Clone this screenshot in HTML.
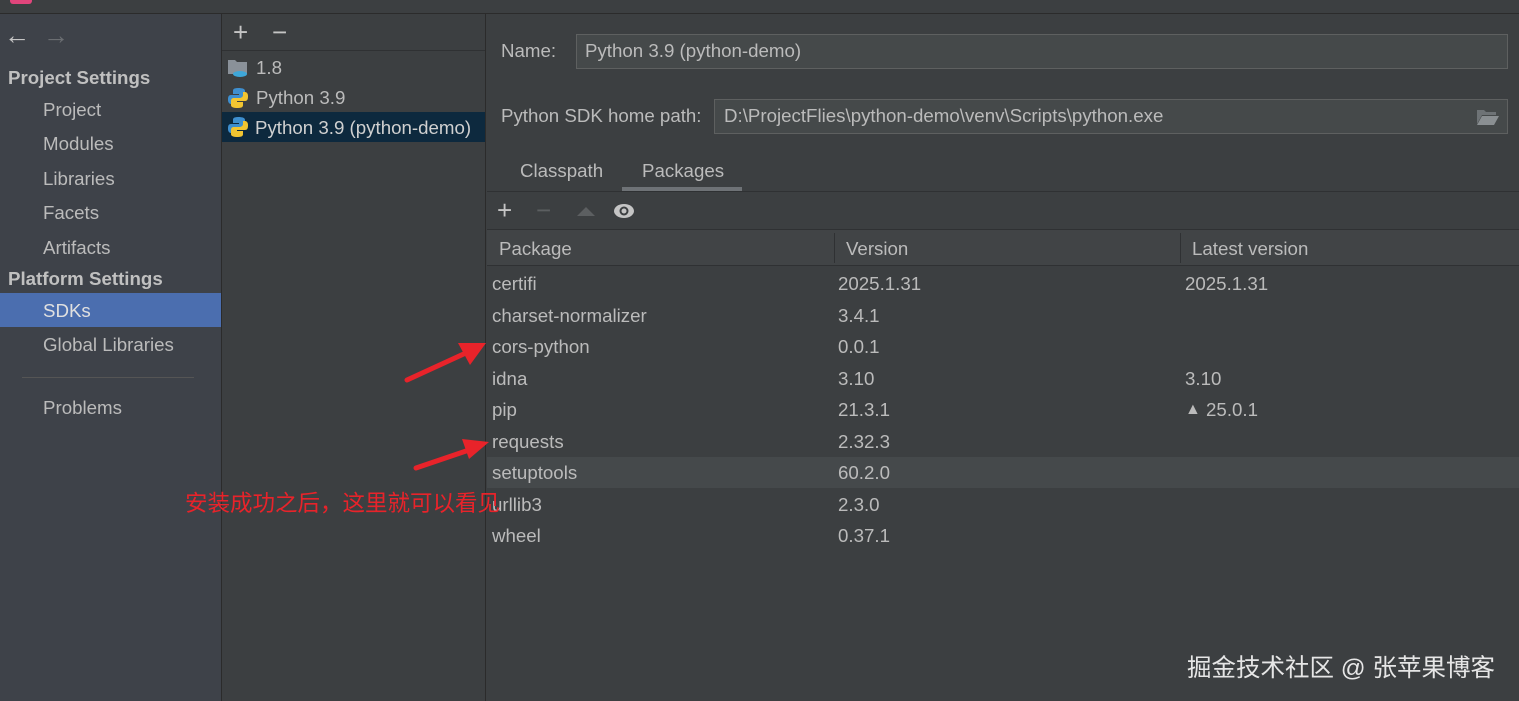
<!DOCTYPE html>
<html><head><meta charset="utf-8"><style>
*{margin:0;padding:0;box-sizing:border-box}
body{width:1519px;height:701px;overflow:hidden;background:#3c3f41;font-family:"Liberation Sans","Noto Sans CJK SC",sans-serif;color:#bbbbbb;font-size:18.7px;position:relative}
.a{position:absolute;white-space:nowrap}
</style></head><body>
<div class="a" style="left:0;top:0;width:1519px;height:14px;background:#3c3f41;border-bottom:1px solid #2b2b2b"></div>
<div class="a" style="left:10px;top:-6px;width:22px;height:10px;background:#e0457b;border-radius:3px"></div>
<!-- sidebar -->
<div class="a" style="left:0;top:14px;width:221px;height:687px;background:#3e4249"></div>
<div class="a" style="left:4px;top:20px;font-size:26px;color:#c5c5c5">&#8592;</div>
<div class="a" style="left:43px;top:20px;font-size:26px;color:#6b6e72">&#8594;</div>
<div class="a" style="left:8px;top:67px;font-weight:bold;color:#c0c0c0">Project Settings</div>
<div class="a" style="left:43px;top:99px">Project</div>
<div class="a" style="left:43px;top:133px">Modules</div>
<div class="a" style="left:43px;top:168px">Libraries</div>
<div class="a" style="left:43px;top:202px">Facets</div>
<div class="a" style="left:43px;top:237px">Artifacts</div>
<div class="a" style="left:8px;top:268px;font-weight:bold;color:#c0c0c0">Platform Settings</div>
<div class="a" style="left:0;top:293px;width:221px;height:34px;background:#4b6eaf"></div>
<div class="a" style="left:43px;top:300px;color:#e0e0e0">SDKs</div>
<div class="a" style="left:43px;top:334px">Global Libraries</div>
<div class="a" style="left:22px;top:377px;width:172px;height:1px;background:#555"></div>
<div class="a" style="left:43px;top:397px">Problems</div>
<!-- middle -->
<div class="a" style="left:221px;top:14px;width:1px;height:687px;background:#2b2b2b"></div>
<div class="a" style="left:222px;top:14px;width:263px;height:37px;background:#3c3f41;border-bottom:1px solid #2f3133"></div>
<div class="a" style="left:233px;top:17px;font-size:26px;color:#c5c5c5">+</div>
<div class="a" style="left:272px;top:17px;font-size:26px;color:#c5c5c5">&#8722;</div>
<svg class="a" style="left:227px;top:58px" width="22" height="22"><path d="M1 2h7l2 2h10v12H1z" fill="#8a9199"/><ellipse cx="13" cy="16" rx="7" ry="3" fill="#3ea7d9"/></svg>
<div class="a" style="left:256px;top:57px">1.8</div>
<svg class="a" style="left:227px;top:87px" width="22" height="22"><path d="M11 1C6 1 6 3 6 4v3h6v1H4C1 8 1 11 1 13s1 4 3 4h2v-3c0-2 2-3 4-3h5c2 0 3-1 3-3V4c0-2-2-3-7-3z" fill="#3e8fcf"/><path d="M11 21c5 0 5-2 5-3v-3h-6v-1h8c3 0 3-3 3-5s-1-4-3-4h-2v3c0 2-2 3-4 3H7c-2 0-3 1-3 3v4c0 2 2 3 7 3z" fill="#f2c531"/></svg>
<div class="a" style="left:256px;top:87px">Python 3.9</div>
<div class="a" style="left:222px;top:112px;width:263px;height:30px;background:#0d293e"></div>
<svg class="a" style="left:227px;top:116px" width="22" height="22"><path d="M11 1C6 1 6 3 6 4v3h6v1H4C1 8 1 11 1 13s1 4 3 4h2v-3c0-2 2-3 4-3h5c2 0 3-1 3-3V4c0-2-2-3-7-3z" fill="#3e8fcf"/><path d="M11 21c5 0 5-2 5-3v-3h-6v-1h8c3 0 3-3 3-5s-1-4-3-4h-2v3c0 2-2 3-4 3H7c-2 0-3 1-3 3v4c0 2 2 3 7 3z" fill="#f2c531"/></svg>
<div class="a" style="left:255px;top:117px;color:#d0d0d0">Python 3.9 (python-demo)</div>
<div class="a" style="left:485px;top:14px;width:1px;height:687px;background:#2b2b2b"></div>
<!-- right -->
<div class="a" style="left:501px;top:40px">Name:</div>
<div class="a" style="left:576px;top:34px;width:932px;height:35px;background:#45494a;border:1px solid #5e6060"></div>
<div class="a" style="left:585px;top:40px">Python 3.9 (python-demo)</div>
<div class="a" style="left:501px;top:105px">Python SDK home path:</div>
<div class="a" style="left:714px;top:99px;width:794px;height:35px;background:#45494a;border:1px solid #5e6060"></div>
<div class="a" style="left:724px;top:105px">D:\ProjectFlies\python-demo\venv\Scripts\python.exe</div>
<svg class="a" style="left:1476px;top:107px" width="24" height="20"><path d="M1 3h7l2 2h10v3H6L1 17z" fill="#6e7376"/><path d="M6 9h17l-5 9H1z" fill="#8a8f92"/></svg>
<div class="a" style="left:520px;top:160px">Classpath</div>
<div class="a" style="left:642px;top:160px">Packages</div>
<div class="a" style="left:622px;top:187px;width:120px;height:4px;background:#6e7276"></div>
<div class="a" style="left:487px;top:191px;width:1032px;height:1px;background:#2f3133"></div>
<div class="a" style="left:497px;top:195px;font-size:26px;color:#c5c5c5">+</div>
<div class="a" style="left:536px;top:195px;font-size:26px;color:#5c5f61">&#8722;</div>
<svg class="a" style="left:576px;top:205px" width="20" height="12"><path d="M1 11L10 2l9 9z" fill="#5c5f61"/></svg>
<svg class="a" style="left:613px;top:202px" width="22" height="18"><ellipse cx="11" cy="9" rx="10" ry="7" fill="#c5c5c5"/><circle cx="11" cy="9" r="4.5" fill="#3c3f41"/><circle cx="11" cy="9" r="2.5" fill="#c5c5c5"/></svg>
<div class="a" style="left:487px;top:229px;width:1032px;height:1px;background:#2f3133"></div>
<div class="a" style="left:487px;top:230px;width:1032px;height:36px;background:#414446;border-bottom:1px solid #2f3133"></div>
<div class="a" style="left:834px;top:233px;width:1px;height:30px;background:#2f3133"></div>
<div class="a" style="left:1180px;top:233px;width:1px;height:30px;background:#2f3133"></div>
<div class="a" style="left:499px;top:238px">Package</div>
<div class="a" style="left:846px;top:238px">Version</div>
<div class="a" style="left:1192px;top:238px">Latest version</div>
<div class="a" style="left:487px;top:457px;width:1032px;height:31px;background:#45494b"></div>
<div class="a" style="left:492px;top:268px;line-height:31.5px">certifi<br>charset-normalizer<br>cors-python<br>idna<br>pip<br>requests<br>setuptools<br>urllib3<br>wheel</div>
<div class="a" style="left:838px;top:268px;line-height:31.5px">2025.1.31<br>3.4.1<br>0.0.1<br>3.10<br>21.3.1<br>2.32.3<br>60.2.0<br>2.3.0<br>0.37.1</div>
<div class="a" style="left:1185px;top:268px;line-height:31.5px">2025.1.31<br><br><br>3.10<br><span style="font-size:16px;position:relative;top:-2px">&#9650;</span> 25.0.1</div>
<!-- annotations -->
<svg class="a" style="left:0;top:0" width="1519" height="701">
<g stroke="#e8232a" stroke-width="5" stroke-linecap="round"><line x1="407" y1="380" x2="468" y2="352"/><line x1="416" y1="468" x2="472" y2="449"/></g>
<path d="M486 343L458 343L470 365z" fill="#e8232a"/>
<path d="M489 442L462 439L469 459z" fill="#e8232a"/>
</svg>
<div class="a" style="left:185px;top:486px;font-size:22.5px;color:#e8232a">安装成功之后，这里就可以看见</div>
<div class="a" style="left:1187px;top:649px;font-size:24.5px;color:#e6e6e6">掘金技术社区 @ 张苹果博客</div>
</body></html>
